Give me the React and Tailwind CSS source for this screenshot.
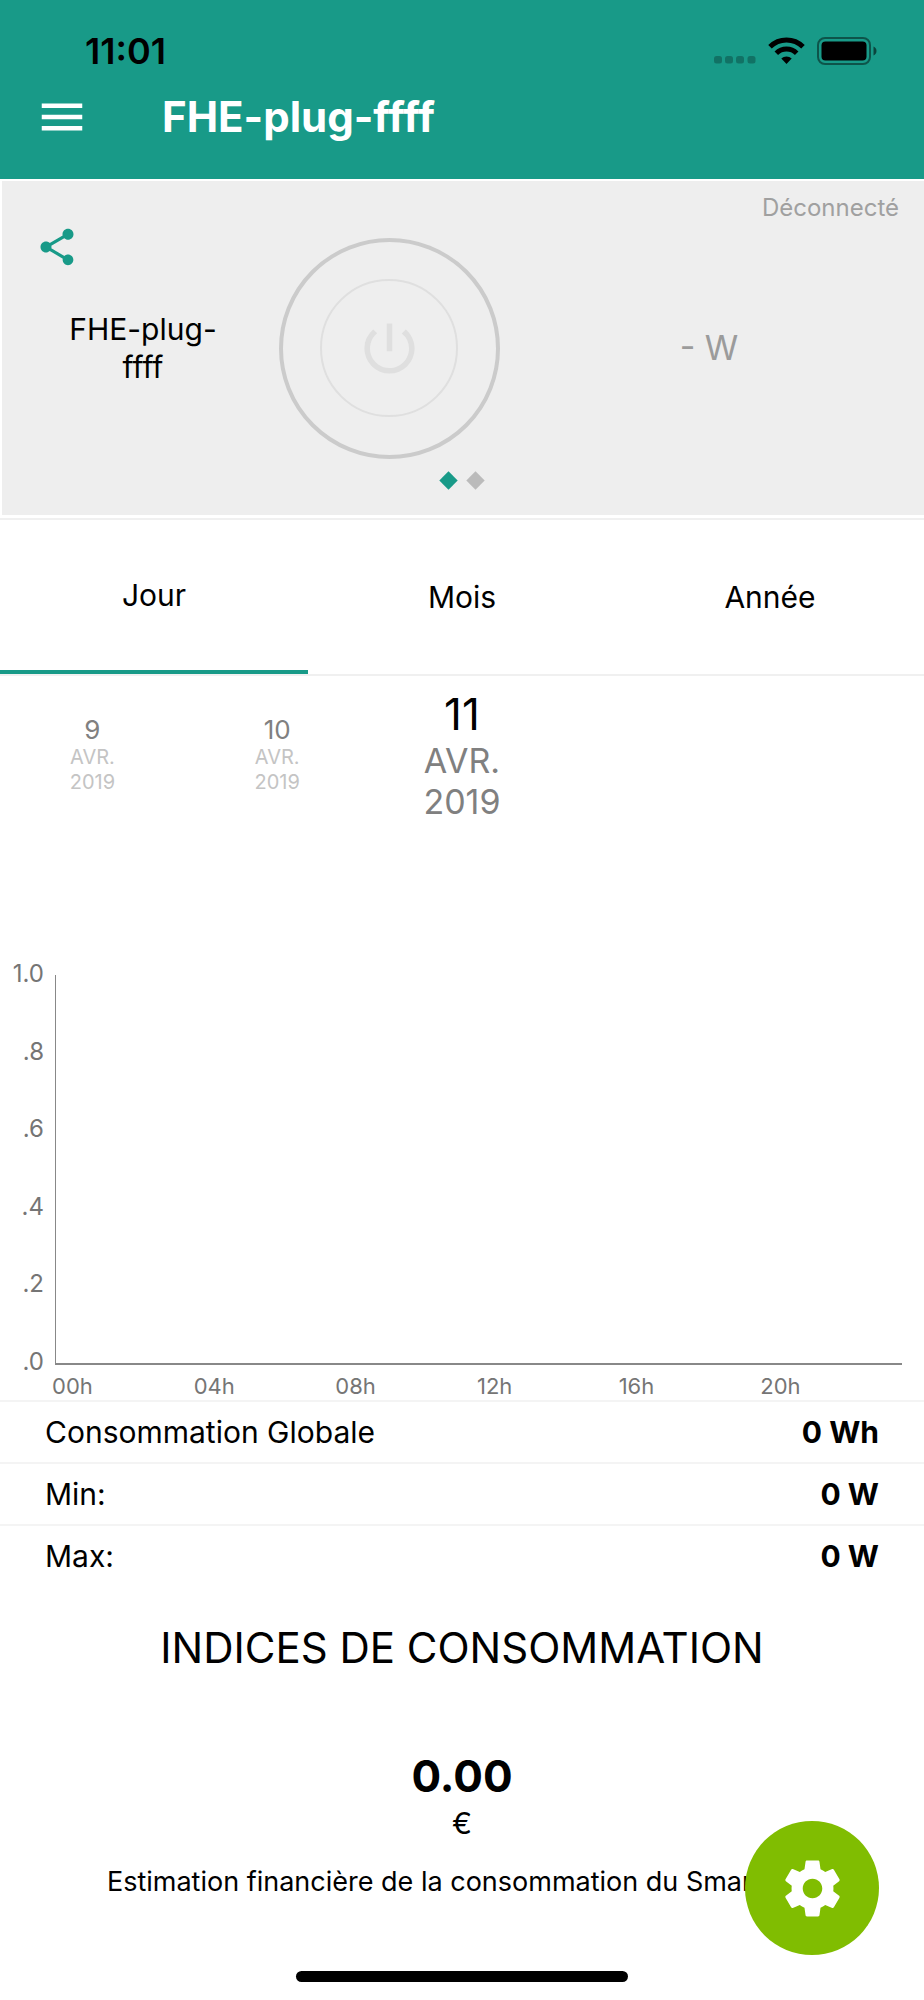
import React, { useState } from "react";
import { MdMenu, MdPowerSettingsNew, MdShare } from "react-icons/md";

const tabs = ["Jour", "Mois", "Année"];

const days = [
  { day: "9", month: "AVR.", year: "2019" },
  { day: "10", month: "AVR.", year: "2019" },
  { day: "11", month: "AVR.", year: "2019" },
];

const yTicks = ["1.0", ".8", ".6", ".4", ".2", ".0"];
const xTicks = ["00h", "04h", "08h", "12h", "16h", "20h"];

const stats = [
  { label: "Consommation Globale", value: "0 Wh" },
  { label: "Min:", value: "0 W" },
  { label: "Max:", value: "0 W" },
];

const StatusIcons = () => (
  <div className="flex items-end gap-3">
    <svg width="42" height="28" viewBox="0 0 42 28" fill="#000" opacity="0.25">
      <rect x="0" y="19" width="8" height="7.5" rx="2.5" />
      <rect x="11" y="19" width="8" height="7.5" rx="2.5" />
      <rect x="22" y="19" width="8" height="7.5" rx="2.5" />
      <rect x="33.5" y="19" width="8" height="7.5" rx="2.5" />
    </svg>
    <svg width="37" height="28" viewBox="0 0 37 28">
      <g fill="none" stroke="#000" strokeWidth="5">
        <path d="M2 9.7a23.500 23.500 0 0 1 33 0" />
        <path d="M8.3 16.2a14.500 14.500 0 0 1 20.400 0" />
      </g>
      <path d="M13.3 21.6a7.400 7.400 0 0 1 10.400 0L18.500 27z" fill="#000" />
    </svg>
    <svg width="60" height="28" viewBox="0 0 60 28">
      <rect x="1" y="1" width="52" height="26" rx="7" fill="none" stroke="#000" strokeWidth="2" opacity="0.45" />
      <rect x="4.5" y="4.5" width="45" height="19" rx="4" fill="#000" />
      <path d="M56.5 9.5c1.800.7 3 2.400 3 4.500s-1.200 3.800-3 4.500z" fill="#000" opacity="0.55" />
    </svg>
  </div>
);

const Header = () => (
  <header className="h-[179px] bg-[#189a88]">
    <div className="flex items-center justify-between pt-[30px] pl-[85px] pr-[47px]">
      <span className="text-[36px] leading-[42px] font-semibold text-black">11:01</span>
      <StatusIcons />
    </div>
    <div className="flex items-center gap-[73px] pl-[35px] pt-[17px]">
      <button type="button" aria-label="Menu" className="text-white">
        <MdMenu size={54} />
      </button>
      <h1 className="text-[42px] leading-[56px] font-bold text-white">FHE-plug-ffff</h1>
    </div>
  </header>
);

const PlugCard = () => (
  <section className="mt-[2px] ml-[2px] grid h-[334px] bg-[#eeeeee]">
    <div className="col-start-1 row-start-1 grid grid-cols-[282fr_210fr_430fr] items-center">
      <p className="px-12 text-center text-[30px] leading-[38px] text-black">
        FHE-plug-<br />ffff
      </p>
      <div className="flex min-w-0 justify-center">
        <button
          type="button"
          aria-label="Allumer ou éteindre"
          className="flex size-[221px] shrink-0 items-center justify-center rounded-full border-4 border-[#cbcbcb]"
        >
          <span className="flex size-[138px] items-center justify-center rounded-full border-2 border-[#dfdfdf] text-[#dfdfdf]">
            <MdPowerSettingsNew size={67} />
          </span>
        </button>
      </div>
      <p className="text-center text-[34px] leading-[42px] text-[#9b9b9b]">- W</p>
    </div>
    <button
      type="button"
      aria-label="Partager"
      className="col-start-1 row-start-1 mt-11 ml-[33px] self-start justify-self-start text-[#189a88]"
    >
      <MdShare size={44} />
    </button>
    <span className="col-start-1 row-start-1 mt-3 mr-[25px] self-start justify-self-end text-[24px] leading-[30px] text-[#a0a0a0]">
      Déconnecté
    </span>
    <div className="col-start-1 row-start-1 mr-[2px] mb-7 flex gap-[14px] self-end justify-self-center">
      <span className="size-[13px] rotate-45 bg-[#189a88]" />
      <span className="size-[13px] rotate-45 bg-[#bbbbbb]" />
    </div>
  </section>
);

const PeriodTabs = ({ active, onChange }) => (
  <nav className="mt-[3px] grid grid-cols-3 border-y-2 border-y-[#f0f0f0]">
    {tabs.map((tab) => (
      <button
        key={tab}
        type="button"
        onClick={() => onChange(tab)}
        className={
          tab === active
            ? "h-[154px] border-b-4 border-[#189a88] text-[30px] text-black"
            : "h-[154px] text-[30px] text-black"
        }
      >
        {tab}
      </button>
    ))}
  </nav>
);

const DayPicker = ({ selected, onSelect }) => (
  <div className="grid grid-cols-5 items-center pt-3">
    {days.map(({ day, month, year }) =>
      day === selected ? (
        <button key={day} type="button" className="flex flex-col items-center text-[#808080]">
          <span className="text-[44px] leading-[52px] text-black">{day}</span>
          <span className="text-[34px] leading-[41px]">{month}</span>
          <span className="text-[34px] leading-[41px]">{year}</span>
        </button>
      ) : (
        <button
          key={day}
          type="button"
          onClick={() => onSelect(day)}
          className="flex flex-col items-center text-[#c4c4c4]"
        >
          <span className="text-[26px] leading-[30px] text-[#808080]">{day}</span>
          <span className="text-[20px] leading-[25px]">{month}</span>
          <span className="text-[20px] leading-[25px]">{year}</span>
        </button>
      )
    )}
  </div>
);

const Chart = () => (
  <section className="mt-[138px] pr-[22px] pb-1 text-[#757575]">
    <div className="flex">
      <div className="flex h-[416px] w-[44px] flex-col justify-between text-right text-[24px] leading-[28px]">
        {yTicks.map((tick) => (
          <span key={tick}>{tick}</span>
        ))}
      </div>
      <div className="mt-[15px] ml-[11px] h-[390px] flex-1 border-b-2 border-l border-[#888888]" />
    </div>
    <div className="grid grid-cols-6 pl-[52px] text-[22px] leading-[20px]">
      {xTicks.map((tick) => (
        <span key={tick}>{tick}</span>
      ))}
    </div>
  </section>
);

const StatsTable = () => (
  <table className="w-full text-[30px] text-black">
    <tbody>
      {stats.map(({ label, value }) => (
        <tr key={label} className="h-[62px] border-t-2 border-[#f4f4f4]">
          <th scope="row" className="pl-[45px] text-left font-normal">
            {label}
          </th>
          <td className="pr-[45px] text-right font-bold">{value}</td>
        </tr>
      ))}
    </tbody>
  </table>
);

const App = () => {
  const [period, setPeriod] = useState("Jour");
  const [day, setDay] = useState("11");

  return (
    <div className="min-h-screen bg-white font-['Inter','Liberation_Sans',sans-serif]">
      <Header />
      <PlugCard />
      <PeriodTabs active={period} onChange={setPeriod} />
      <DayPicker selected={day} onSelect={setDay} />
      <Chart />
      <StatsTable />

      <section className="flex flex-col items-center pt-[35px] pb-20 text-black">
        <h2 className="text-[42px] leading-[52px]">INDICES DE CONSOMMATION</h2>
        <p className="mt-[76px] text-[44px] leading-[52px] font-bold">0.00</p>
        <p className="text-[30px] leading-[42px]">€</p>
        <p className="mt-5 text-[27px] leading-[36px] whitespace-nowrap">
          Estimation financière de la consommation du Smartplug
        </p>
      </section>

      <button
        type="button"
        aria-label="Réglages"
        className="fixed right-[45px] bottom-[45px] flex size-[134px] items-center justify-center rounded-full bg-[#80bd01] text-white"
      >
        <svg width="67" height="67" viewBox="0 0 24 24" fill="currentColor">
          <path d="M19.43 12.98c.04-.32.07-.64.07-.98s-.03-.66-.07-.98l2.11-1.65c.19-.15.24-.42.12-.64l-2-3.46c-.12-.22-.39-.3-.61-.22l-2.49 1c-.52-.4-1.08-.73-1.69-.98l-.38-2.65C14.46 2.18 14.25 2 14 2h-4c-.25 0-.46.18-.49.42l-.38 2.65c-.61.25-1.17.59-1.69.98l-2.49-1c-.23-.09-.49 0-.61.22l-2 3.46c-.13.22-.07.49.12.64l2.11 1.65c-.04.32-.07.65-.07.98s.03.66.07.98l-2.11 1.65c-.19.15-.24.42-.12.64l2 3.46c.12.22.39.3.61.22l2.49-1c.52.4 1.08.73 1.69.98l.38 2.65c.03.24.24.42.49.42h4c.25 0 .46-.18.49-.42l.38-2.65c.61-.25 1.17-.59 1.69-.98l2.49 1c.23.09.49 0 .61-.22l2-3.46c.12-.22.07-.49-.12-.64l-2.11-1.65zM12 15.5c-1.93 0-3.5-1.57-3.5-3.5s1.57-3.5 3.5-3.5 3.5 1.57 3.5 3.5-1.57 3.5-3.5 3.5z" />
        </svg>
      </button>
      <div className="pointer-events-none fixed inset-x-0 bottom-[18px] flex justify-center">
        <span className="h-[11px] w-[36%] rounded-full bg-black" />
      </div>
    </div>
  );
};

export default App;
